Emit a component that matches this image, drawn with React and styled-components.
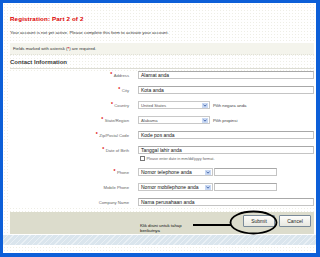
import styled, { createGlobalStyle } from "styled-components"

const Global = createGlobalStyle`
  html, body { margin: 0; padding: 0; background: #0d5fd8; }
  body { font-family: "Liberation Sans", Arial, sans-serif; }
`

const Frame = styled.div`
  width: 320px;
  height: 257px;
  box-sizing: border-box;
  padding: 3px 4px 4px 3px;
  background: #0d5fd8;
`

const Window = styled.div`
  height: 250px;
  box-sizing: border-box;
  background-color: #fff;
  background-image: radial-gradient(#eeeee6 0.6px, transparent 0.8px);
  background-size: 3px 3px;
  display: flex;
  flex-direction: column;
`

const Content = styled.div`
  padding: 12px 2px 0 7px;
  display: flex;
  flex-direction: column;
`

const Title = styled.h1`
  margin: 0;
  font-size: 6.2px;
  line-height: 8px;
  font-weight: bold;
  color: #dd0000;
  letter-spacing: 0.15px;
`

const Intro = styled.p`
  margin: 7px 0 0;
  font-size: 4.4px;
  line-height: 6px;
  color: #333;
`

const Notice = styled.div`
  margin-top: 7px;
  height: 12px;
  box-sizing: border-box;
  padding-left: 3px;
  display: flex;
  align-items: center;
  background: #f4f4ec;
  border-bottom: 1px dotted #e2e2d8;
  font-size: 4.3px;
  color: #333;
`

const Red = styled.span`
  color: #dd0000;
  font-weight: bold;
`

const Heading = styled.h2`
  margin: 4px 0 0;
  padding-bottom: 2px;
  border-bottom: 1px solid #dcdcd4;
  font-size: 6px;
  line-height: 7px;
  font-weight: bold;
  color: #3a3a3a;
`

const Rows = styled.div`
  margin-top: 2px;
  display: flex;
  flex-direction: column;
  background: #fff;
`

const Row = styled.div`
  display: grid;
  grid-template-columns: 119px 1fr;
  column-gap: 9px;
  align-items: center;
  height: ${(p) => (p.$hint ? 5 : 8)}px;
  margin-bottom: ${(p) => (p.$tight ? 2 : 7)}px;
`

const Label = styled.div`
  display: flex;
  align-items: center;
  justify-content: flex-end;
  height: 8px;
  font-size: 4.2px;
  color: #666;
  white-space: nowrap;
`

const Star = styled.span`
  color: #dd0000;
  font-size: 5px;
  font-weight: bold;
  margin: -2px 1.5px 0 0;
`

const Field = styled.div`
  display: flex;
  align-items: center;
  gap: ${(p) => p.$gap ?? 0}px;
  height: 100%;
`

const Input = styled.div`
  box-sizing: border-box;
  height: 8px;
  width: ${(p) => (p.$w ? `${p.$w}px` : "100%")};
  border: 1px solid #c4c4c4;
  border-top-color: #a8a8a8;
  background: #fff;
  padding-left: 2px;
  font-size: 5px;
  line-height: 6px;
  color: #111;
  white-space: nowrap;
  overflow: hidden;
`

const Select = styled.div`
  box-sizing: border-box;
  height: 8px;
  width: ${(p) => p.$w}px;
  flex: none;
  border: 1px solid #c8c8c8;
  background: #fff;
  display: flex;
  align-items: center;
  justify-content: space-between;
  padding: 0 1px 0 2px;
  font-size: ${(p) => p.$fs ?? 4.2}px;
  color: ${(p) => p.$color ?? "#555"};
  white-space: nowrap;
`

const Arrow = styled.span`
  width: 6px;
  height: 5px;
  background: #c9d9f4;
  display: flex;
  align-items: center;
  justify-content: center;
`

const Helper = styled.span`
  font-size: 4.3px;
  color: #444;
  white-space: nowrap;
`

const Hint = styled.div`
  display: flex;
  align-items: center;
  gap: 1.5px;
  padding-left: 2px;
  font-size: 3.8px;
  color: #666;
  white-space: nowrap;
`

const HintIcon = styled.span`
  width: 3px;
  height: 3px;
  border: 0.6px solid #777;
`

const Bar = styled.div`
  position: relative;
  margin: 4px 2px 0 7px;
  height: 22px;
  background: #dcdccc;
  display: grid;
  grid-template-columns: 119px 1fr;
  column-gap: 9px;
`

const BarInner = styled.div`
  display: flex;
  align-items: flex-start;
  padding-right: 3px;
`

const Note = styled.div`
  margin-top: 11px;
  padding-left: 2px;
  width: 56px;
  font-size: 4.3px;
  line-height: 5px;
  color: #111;
`

const Buttons = styled.div`
  margin-left: auto;
  margin-top: 3px;
  display: flex;
  gap: 4px;
`

const Button = styled.button`
  width: 32px;
  height: 12px;
  padding: 0;
  border: 1px solid #7a8a99;
  border-radius: 1px;
  background: linear-gradient(#fdfdfb, #e8e8e0);
  font-family: "Liberation Sans", Arial, sans-serif;
  font-size: 5px;
  color: #222;
`

const Annotation = styled.svg`
  position: absolute;
  left: 183px;
  top: -3px;
`

const Strip = styled.div`
  margin-top: 1px;
  height: 10px;
  background: repeating-linear-gradient(135deg, #dae5ed 0 3px, #e9f0f5 3px 4px);
`

const ArrowIcon = () => (
  <Arrow>
    <svg width="4" height="3" viewBox="0 0 4 3">
      <path d="M0.5 0.6 L2 2.2 L3.5 0.6" fill="none" stroke="#2a4f9a" strokeWidth="0.8" />
    </svg>
  </Arrow>
)

const App = () => {
  return (
    <Frame>
      <Global />
      <Window>
        <Content>
          <Title>Registration: Part 2 of 2</Title>
          <Intro>Your account is not yet active. Please complete this form to activate your account.</Intro>
          <Notice>
            Fields marked with asterisk (<Red>*</Red>) are required.
          </Notice>
          <Heading>Contact Information</Heading>
          <Rows>
            <Row>
              <Label><Star>*</Star>Address</Label>
              <Field><Input>Alamat anda</Input></Field>
            </Row>
            <Row>
              <Label><Star>*</Star>City</Label>
              <Field><Input>Kota anda</Input></Field>
            </Row>
            <Row>
              <Label><Star>*</Star>Country</Label>
              <Field $gap={3}>
                <Select $w={72}>United States<ArrowIcon /></Select>
                <Helper>Pilih negara anda</Helper>
              </Field>
            </Row>
            <Row>
              <Label><Star>*</Star>State/Region</Label>
              <Field $gap={3}>
                <Select $w={72}>Alabama<ArrowIcon /></Select>
                <Helper>Pilih propinsi</Helper>
              </Field>
            </Row>
            <Row>
              <Label><Star>*</Star>Zip/Postal Code</Label>
              <Field><Input>Kode pos anda</Input></Field>
            </Row>
            <Row $tight>
              <Label><Star>*</Star>Date of Birth</Label>
              <Field><Input>Tanggal lahir anda</Input></Field>
            </Row>
            <Row $hint>
              <span />
              <Hint><HintIcon />Please enter date in mm/dd/yyyy format.</Hint>
            </Row>
            <Row>
              <Label><Star>*</Star>Phone</Label>
              <Field $gap={1}>
                <Select $w={75} $fs={5} $color="#111">Nomor telephone anda<ArrowIcon /></Select>
                <Input $w={63} />
              </Field>
            </Row>
            <Row>
              <Label>Mobile Phone</Label>
              <Field $gap={1}>
                <Select $w={75} $fs={5} $color="#111">Nomor mobilephone anda<ArrowIcon /></Select>
                <Input $w={63} />
              </Field>
            </Row>
            <Row $tight>
              <Label>Company Name</Label>
              <Field><Input>Nama perusahaan anda</Input></Field>
            </Row>
          </Rows>
        </Content>
        <Bar>
          <span />
          <BarInner>
            <Note>Klik disini untuk tahap berikutnya</Note>
            <Buttons>
              <Button>Submit</Button>
              <Button>Cancel</Button>
            </Buttons>
          </BarInner>
          <Annotation width="96" height="27" viewBox="0 0 96 27">
            <line x1="0" y1="16" x2="38" y2="16" stroke="#000" strokeWidth="2" />
            <ellipse cx="60.5" cy="13.5" rx="23" ry="11" fill="none" stroke="#000" strokeWidth="1.8" />
          </Annotation>
        </Bar>
        <Strip />
      </Window>
    </Frame>
  )
}

export default App
